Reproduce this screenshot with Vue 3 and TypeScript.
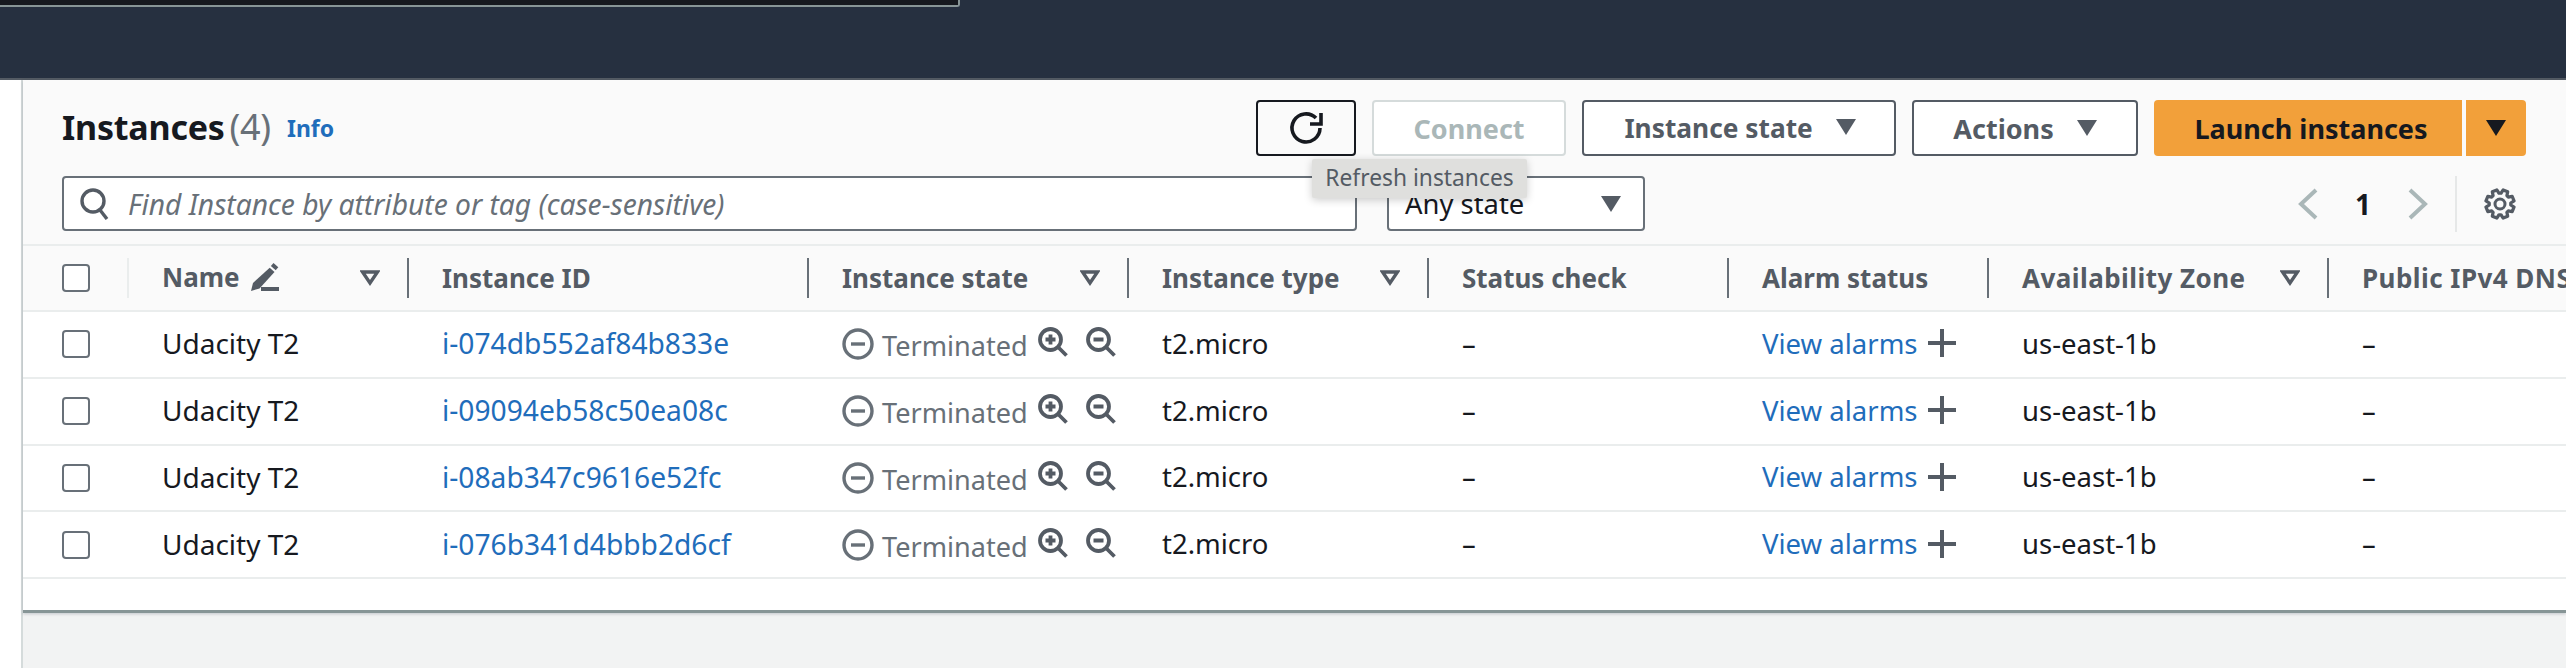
<script setup lang="ts">
type Row = { name: string; id: string }

const rows: Row[] = [
  { name: 'Udacity T2', id: 'i-074db552af84b833e' },
  { name: 'Udacity T2', id: 'i-09094eb58c50ea08c' },
  { name: 'Udacity T2', id: 'i-08ab347c9616e52fc' },
  { name: 'Udacity T2', id: 'i-076b341d4bbb2d6cf' },
]

// eight toothed gear outline for the preferences icon
const gearPath = (() => {
  const points: string[] = []
  const teeth = 8
  for (let i = 0; i < teeth; i++) {
    const mid = (i * Math.PI * 2) / teeth + Math.PI / 8
    const corners: [number, number][] = [
      [-0.3, 10.8],
      [-0.17, 14.4],
      [0.17, 14.4],
      [0.3, 10.8],
    ]
    for (const [da, r] of corners) {
      const x = 16 + r * Math.cos(mid + da)
      const y = 16 + r * Math.sin(mid + da)
      points.push(`${x.toFixed(2)} ${y.toFixed(2)}`)
    }
  }
  return `M${points.join('L')}Z`
})()
</script>

<template>
  <div class="page">
    <header class="topbar">
      <div class="topsearch"></div>
    </header>

    <div class="content">
      <section class="panel">
        <div class="toolbar">
          <div class="line-one">
            <h1 class="title">Instances <span class="count">(4)</span></h1>
            <a class="info">Info</a>
            <div class="actions">
              <button class="btn refresh">
                <svg width="36" height="36" viewBox="0 0 36 36" fill="none" stroke="#16191f" stroke-width="3.6">
                  <path d="M32 18a14 14 0 1 1-4-9.900" />
                  <path d="M33 3v11H22" />
                </svg>
                <span class="tooltip">Refresh instances</span>
              </button>
              <button class="btn connect">Connect</button>
              <button class="btn state">Instance state <i class="caret"></i></button>
              <button class="btn act">Actions <i class="caret"></i></button>
              <div class="launch">
                <button class="btn primary">Launch instances</button>
                <button class="btn primary split"><i class="caret dark"></i></button>
              </div>
            </div>
          </div>
          <div class="line-two">
            <div class="search">
              <svg width="30" height="32" viewBox="0 0 30 32" fill="none" stroke="#545b64" stroke-width="3.4">
                <circle cx="13" cy="13" r="11" />
                <path d="M20 22l7 9" />
              </svg>
              <span class="placeholder">Find Instance by attribute or tag (case-sensitive)</span>
            </div>
            <div class="select">
              <span>Any state</span>
              <i class="caret"></i>
            </div>
            <div class="pager">
              <svg width="20" height="32" viewBox="0 0 20 32" fill="none" stroke="#aab7b8" stroke-width="4"><path d="M18 2L3 16l15 14" /></svg>
              <span class="page-no">1</span>
              <svg width="20" height="32" viewBox="0 0 20 32" fill="none" stroke="#aab7b8" stroke-width="4"><path d="M2 2l15 14L2 30" /></svg>
              <div class="pager-sep"></div>
              <svg width="32" height="32" viewBox="0 0 32 32" fill="none" stroke="#545b64" stroke-linejoin="round">
                <circle cx="16" cy="16" r="5" stroke-width="3" />
                <path stroke-width="3.2" :d="gearPath" />
              </svg>
            </div>
          </div>
        </div>

        <div class="grid head">
          <div class="cell check light"><span class="box"></span></div>
          <div class="cell">
            <span class="name-label">Name</span>
            <svg class="pencil" width="28" height="28" viewBox="0 0 28 28" fill="#545b64">
              <path d="M22.500 0l4.800 4.200-2.600 3-4.800-4.200z" />
              <path d="M18.700 4.700l4.800 4.200L8.500 25.500 0 28l2-8z" />
              <rect x="10" y="24" width="18" height="4" />
            </svg>
            <svg class="sort" width="20" height="16" viewBox="0 0 20 16" fill="none" stroke="#545b64" stroke-width="3.4"><path d="M2.500 2h15L10 13z" /></svg>
          </div>
          <div class="cell">Instance ID</div>
          <div class="cell">
            <span>Instance state</span>
            <svg class="sort" width="20" height="16" viewBox="0 0 20 16" fill="none" stroke="#545b64" stroke-width="3.4"><path d="M2.500 2h15L10 13z" /></svg>
          </div>
          <div class="cell">
            <span>Instance type</span>
            <svg class="sort" width="20" height="16" viewBox="0 0 20 16" fill="none" stroke="#545b64" stroke-width="3.4"><path d="M2.500 2h15L10 13z" /></svg>
          </div>
          <div class="cell">Status check</div>
          <div class="cell">Alarm status</div>
          <div class="cell">
            <span class="az">Availability Zone</span>
            <svg class="sort" width="20" height="16" viewBox="0 0 20 16" fill="none" stroke="#545b64" stroke-width="3.4"><path d="M2.500 2h15L10 13z" /></svg>
          </div>
          <div class="cell last az">Public IPv4 DNS</div>
        </div>

        <div v-for="row in rows" :key="row.id" class="grid row">
          <div class="cell check"><span class="box"></span></div>
          <div class="cell name">{{ row.name }}</div>
          <div class="cell link id">{{ row.id }}</div>
          <div class="cell status">
            <svg width="32" height="32" viewBox="0 0 32 32" fill="none" stroke="#687078" stroke-width="3.4">
              <circle cx="16" cy="16" r="14" />
              <path d="M9 16h14" />
            </svg>
            <span class="terminated">Terminated</span>
            <svg class="zoom" width="30" height="30" viewBox="0 0 30 30" fill="none" stroke="#545b64" stroke-width="3.8">
              <circle cx="12.500" cy="12.500" r="10.500" />
              <path d="M20 20l8.500 8.500M7.500 12.500h10M12.500 7.500v10" />
            </svg>
            <svg class="zoom second" width="30" height="30" viewBox="0 0 30 30" fill="none" stroke="#545b64" stroke-width="3.8">
              <circle cx="12.500" cy="12.500" r="10.500" />
              <path d="M20 20l8.500 8.500M7.500 12.500h10" />
            </svg>
          </div>
          <div class="cell">t2.micro</div>
          <div class="cell">–</div>
          <div class="cell">
            <span class="link">View alarms</span>
            <svg class="plus" width="28" height="28" viewBox="0 0 28 28" fill="none" stroke="#545b64" stroke-width="4"><path d="M14 0v28M0 14h28" /></svg>
          </div>
          <div class="cell">us-east-1b</div>
          <div class="cell">–</div>
        </div>
      </section>
    </div>
  </div>
</template>

<style>
html,
body {
  margin: 0;
  overflow: hidden;
}
</style>

<style scoped>
.page {
  width: 2566px;
  height: 668px;
  font-family: 'Noto Sans', sans-serif;
  color: #16191f;
  background: #fff;
  overflow: hidden;
}

.topbar {
  height: 78px;
  background: #263040;
  border-bottom: 2px solid #545b64;
}

.topsearch {
  width: 958px;
  height: 5px;
  background: #16191f;
  border: 1px solid #879596;
  border-width: 0 2px 2px 0;
  border-bottom-right-radius: 3px;
}

.content {
  height: 588px;
  margin-left: 21px;
  border-left: 2px solid #d5dbdb;
  background: #f2f3f3;
}

.panel {
  height: 533px;
  box-sizing: border-box;
  background: #fff;
  border-bottom: 3px solid #879596;
  box-shadow: 0 1px 3px rgba(0, 21, 41, 0.2);
}

.toolbar {
  height: 164px;
  padding: 20px 40px 0 39px;
  box-sizing: border-box;
  background: #fafafa;
}

.line-one {
  display: flex;
  align-items: center;
  height: 56px;
}

.title {
  margin: -4px 0 0;
  font-size: 34px;
  font-weight: 700;
  letter-spacing: -0.2px;
}

.count {
  margin-left: -4px;
  font-size: 36px;
  font-weight: 400;
  color: #687078;
}

.info {
  margin-left: 16px;
  font-size: 23px;
  font-weight: 700;
  color: #1f6dbb;
}

.actions {
  display: flex;
  margin-left: auto;
  gap: 16px;
  height: 56px;
}

.btn {
  position: relative;
  height: 56px;
  box-sizing: border-box;
  padding: 0;
  font: 700 27px 'Noto Sans', sans-serif;
  color: #545b64;
  background: #fff;
  border: 2px solid #545b64;
  border-radius: 4px;
}

.refresh {
  width: 100px;
  background: #fafafa;
  border-color: #16191f;
}

.refresh svg {
  display: block;
  margin: auto;
}

.tooltip {
  position: absolute;
  z-index: 2;
  top: 57px;
  left: 54px;
  width: 215px;
  height: 39px;
  line-height: 37px;
  font-size: 22.8px;
  font-weight: 400;
  color: #545b64;
  text-align: center;
  background: #dfdfdd;
  border-radius: 2px;
  box-shadow: 0 2px 8px rgba(0, 0, 0, 0.2);
}

.connect {
  width: 194px;
  color: #aab7b8;
  border-color: #d5dbdb;
}

.state {
  width: 314px;
  padding-left: 2px;
  font-size: 26.3px;
}

.act {
  width: 226px;
}

.caret {
  display: inline-block;
  width: 0;
  height: 0;
  margin-left: 16px;
  border-style: solid;
  border-width: 16px 10px 0;
  border-color: #545b64 transparent transparent;
  vertical-align: 3px;
}

.caret.dark {
  margin-left: 0;
  border-top-color: #16191f;
}

.launch {
  display: flex;
  gap: 4px;
}

.primary {
  width: 308px;
  padding-left: 6px;
  color: #16191f;
  background: #f2a03a;
  border: none;
  border-radius: 4px 0 0 4px;
}

.split {
  width: 60px;
  padding-left: 0;
  border-radius: 0 4px 4px 0;
}

.line-two {
  display: flex;
  margin-top: 20px;
  height: 55px;
}

.search {
  display: flex;
  align-items: center;
  gap: 18px;
  width: 1295px;
  padding-left: 16px;
  box-sizing: border-box;
  background: #fff;
  border: 2px solid #687078;
  border-radius: 4px;
}

.placeholder {
  font-size: 28.2px;
  font-style: italic;
  color: #687078;
}

.select {
  display: flex;
  align-items: center;
  justify-content: space-between;
  width: 258px;
  margin-left: 30px;
  padding: 0 22px 0 16px;
  box-sizing: border-box;
  font-size: 27.4px;
  background: #fff;
  border: 2px solid #687078;
  border-radius: 4px;
}

.pager {
  display: flex;
  align-items: center;
  margin-left: auto;
  padding-right: 10px;
}

.page-no {
  display: flex;
  justify-content: center;
  width: 12px;
  margin: 0 39px;
  font-size: 28px;
  font-weight: 700;
  line-height: 1;
}

.pager-sep {
  width: 2px;
  height: 56px;
  margin: 0 27px;
  background: #e6e8e8;
}

.grid {
  display: grid;
  grid-template-columns: 106px 280px 400px 320px 300px 300px 260px 340px 1fr;
  height: 66.8px;
  box-sizing: border-box;
  font-size: 27.5px;
  border-bottom: 2px solid #eaeded;
}

.head {
  height: 68px;
  font-size: 26px;
  font-weight: 700;
  color: #545b64;
  background: #fafafa;
  border-top: 2px solid #eaeded;
}

.cell {
  position: relative;
  display: flex;
  align-items: center;
  padding-left: 33px;
  white-space: nowrap;
  overflow: hidden;
}

.row .cell {
  padding-bottom: 2px;
}

.row .check,
.row .status {
  padding-bottom: 0;
}

.check {
  padding-left: 39px;
}

.box {
  width: 28px;
  height: 28px;
  box-sizing: border-box;
  background: #fff;
  border: 2px solid #687078;
  border-radius: 4px;
}

.head .cell::after {
  content: '';
  position: absolute;
  top: 12px;
  right: 0;
  width: 2px;
  height: 40px;
  background: #687078;
}

.head .check::after {
  background: #eaeded;
}

.head .last::after {
  display: none;
}

.name-label {
  margin-top: -3px;
}

.pencil {
  margin-left: 11px;
  margin-top: -2px;
}

.sort {
  position: absolute;
  right: 29px;
  top: 24px;
}

.az {
  letter-spacing: 0.45px;
}

.name {
  font-size: 28px;
}

.link {
  color: #1f6dbb;
}

.id {
  font-size: 28.2px;
}

.terminated {
  margin-left: 8px;
  margin-top: 3px;
  font-size: 27.1px;
  color: #687078;
}

.zoom {
  margin-left: 10px;
  margin-top: -4px;
}

.zoom.second {
  margin-left: 18px;
}

.plus {
  margin-left: 10px;
}
</style>
